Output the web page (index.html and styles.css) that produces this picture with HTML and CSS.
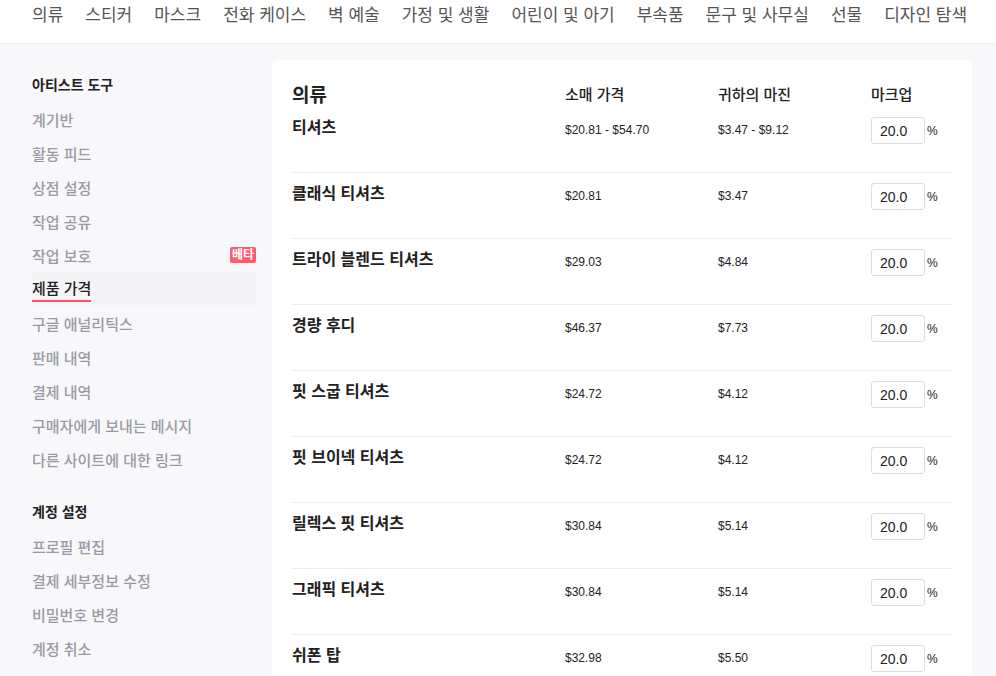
FILE: index.html
```html
<!DOCTYPE html>
<html lang="ko">
<head>
    <meta charset="UTF-8">
    <meta name="viewport" content="width=device-width, initial-scale=1.0">
    <title>제품 가격</title>
    <link rel="stylesheet" href="styles.css">
</head>
<body>
    <nav class="topnav">
        <a href="#">의류</a>
        <a href="#">스티커</a>
        <a href="#">마스크</a>
        <a href="#">전화 케이스</a>
        <a href="#">벽 예술</a>
        <a href="#">가정 및 생활</a>
        <a href="#">어린이 및 아기</a>
        <a href="#">부속품</a>
        <a href="#">문구 및 사무실</a>
        <a href="#">선물</a>
        <a href="#">디자인 탐색</a>
    </nav>

    <div class="page">
        <aside class="sidebar">
            <div class="side-title">아티스트 도구</div>
            <a class="side-item" href="#">계기반</a>
            <a class="side-item" href="#">활동 피드</a>
            <a class="side-item" href="#">상점 설정</a>
            <a class="side-item" href="#">작업 공유</a>
            <a class="side-item" href="#">작업 보호 <span class="badge">베타</span></a>
            <a class="side-item active" href="#"><span>제품 가격</span></a>
            <a class="side-item" href="#">구글 애널리틱스</a>
            <a class="side-item" href="#">판매 내역</a>
            <a class="side-item" href="#">결제 내역</a>
            <a class="side-item" href="#">구매자에게 보내는 메시지</a>
            <a class="side-item" href="#">다른 사이트에 대한 링크</a>

            <div class="side-title second">계정 설정</div>
            <a class="side-item" href="#">프로필 편집</a>
            <a class="side-item" href="#">결제 세부정보 수정</a>
            <a class="side-item" href="#">비밀번호 변경</a>
            <a class="side-item" href="#">계정 취소</a>
        </aside>

        <main class="card">
            <div class="price-head">
                <h2>의류</h2>
                <span>소매 가격</span>
                <span>귀하의 마진</span>
                <span>마크업</span>
            </div>

            <div class="price-row">
                <div class="name">티셔츠</div>
                <div class="amount">$20.81 - $54.70</div>
                <div class="amount">$3.47 - $9.12</div>
                <div class="markup"><input type="text" value="20.0"> %</div>
            </div>
            <div class="price-row">
                <div class="name">클래식 티셔츠</div>
                <div class="amount">$20.81</div>
                <div class="amount">$3.47</div>
                <div class="markup"><input type="text" value="20.0"> %</div>
            </div>
            <div class="price-row">
                <div class="name">트라이 블렌드 티셔츠</div>
                <div class="amount">$29.03</div>
                <div class="amount">$4.84</div>
                <div class="markup"><input type="text" value="20.0"> %</div>
            </div>
            <div class="price-row">
                <div class="name">경량 후디</div>
                <div class="amount">$46.37</div>
                <div class="amount">$7.73</div>
                <div class="markup"><input type="text" value="20.0"> %</div>
            </div>
            <div class="price-row">
                <div class="name">핏 스굽 티셔츠</div>
                <div class="amount">$24.72</div>
                <div class="amount">$4.12</div>
                <div class="markup"><input type="text" value="20.0"> %</div>
            </div>
            <div class="price-row">
                <div class="name">핏 브이넥 티셔츠</div>
                <div class="amount">$24.72</div>
                <div class="amount">$4.12</div>
                <div class="markup"><input type="text" value="20.0"> %</div>
            </div>
            <div class="price-row">
                <div class="name">릴렉스 핏 티셔츠</div>
                <div class="amount">$30.84</div>
                <div class="amount">$5.14</div>
                <div class="markup"><input type="text" value="20.0"> %</div>
            </div>
            <div class="price-row">
                <div class="name">그래픽 티셔츠</div>
                <div class="amount">$30.84</div>
                <div class="amount">$5.14</div>
                <div class="markup"><input type="text" value="20.0"> %</div>
            </div>
            <div class="price-row">
                <div class="name">쉬폰 탑</div>
                <div class="amount">$32.98</div>
                <div class="amount">$5.50</div>
                <div class="markup"><input type="text" value="20.0"> %</div>
            </div>
        </main>
    </div>
</body>
</html>
```

FILE: styles.css
```css
body {
    margin: 0;
    font-family: "Liberation Sans", "Noto Sans CJK KR", sans-serif;
    background-color: #f8f8fa;
    color: #222;
    overflow: hidden;
}

a {
    text-decoration: none;
}

.topnav {
    display: flex;
    gap: 22px;
    height: 44px;
    box-sizing: border-box;
    padding: 4px 32px 0;
    background-color: #fff;
    border-bottom: 1px solid #eeeef2;
    white-space: nowrap;
}

.topnav a {
    font-size: 17px;
    line-height: 24px;
    color: #555;
}

.page {
    display: flex;
    gap: 16px;
    padding: 16px 24px 0 32px;
}

.sidebar {
    width: 224px;
    flex-shrink: 0;
    padding-top: 8px;
}

.side-title {
    font-size: 14px;
    font-weight: bold;
    color: #222;
    line-height: 34px;
}

.side-title.second {
    margin-top: 19px;
}

.side-item {
    display: flex;
    justify-content: space-between;
    align-items: center;
    height: 34px;
    font-size: 15px;
    font-weight: 500;
    color: #999aa5;
}

.side-item.active {
    background-color: #f5f5f7;
    color: #222;
}

.side-item.active span {
    line-height: 18px;
    padding: 4px 0 2px;
    border-bottom: 2px solid #ff4f6a;
}

.badge {
    background-color: #ff5a6e;
    color: #fff;
    font-size: 12px;
    font-weight: bold;
    line-height: 16px;
    padding: 0 2px;
    border-radius: 2px;
}

.card {
    width: 660px;
    background-color: #fff;
    border-radius: 6px;
    padding: 20px 20px 0;
    min-height: 700px;
}

.price-head,
.price-row {
    display: grid;
    grid-template-columns: 273px 153px 153px 1fr;
}

.price-head {
    height: 27px;
    align-items: center;
}

.price-head h2 {
    margin: 0;
    font-size: 19px;
    font-weight: bold;
}

.price-head span {
    font-size: 15px;
    font-weight: 500;
}

.price-row {
    height: 66px;
    box-sizing: border-box;
    padding-top: 10px;
    border-bottom: 1px solid #eeeef2;
    align-items: start;
}

.price-row .name {
    font-size: 16px;
    font-weight: bold;
    line-height: 22px;
}

.price-row .amount {
    font-size: 12px;
    line-height: 27px;
}

.markup {
    display: flex;
    align-items: center;
    gap: 2px;
    font-size: 12px;
}

.markup input {
    width: 54px;
    height: 27px;
    box-sizing: border-box;
    border: 1px solid #ddd;
    border-radius: 3px;
    padding: 0 8px;
    font-family: "Liberation Sans", sans-serif;
    font-size: 14px;
    color: #222;
}
```
